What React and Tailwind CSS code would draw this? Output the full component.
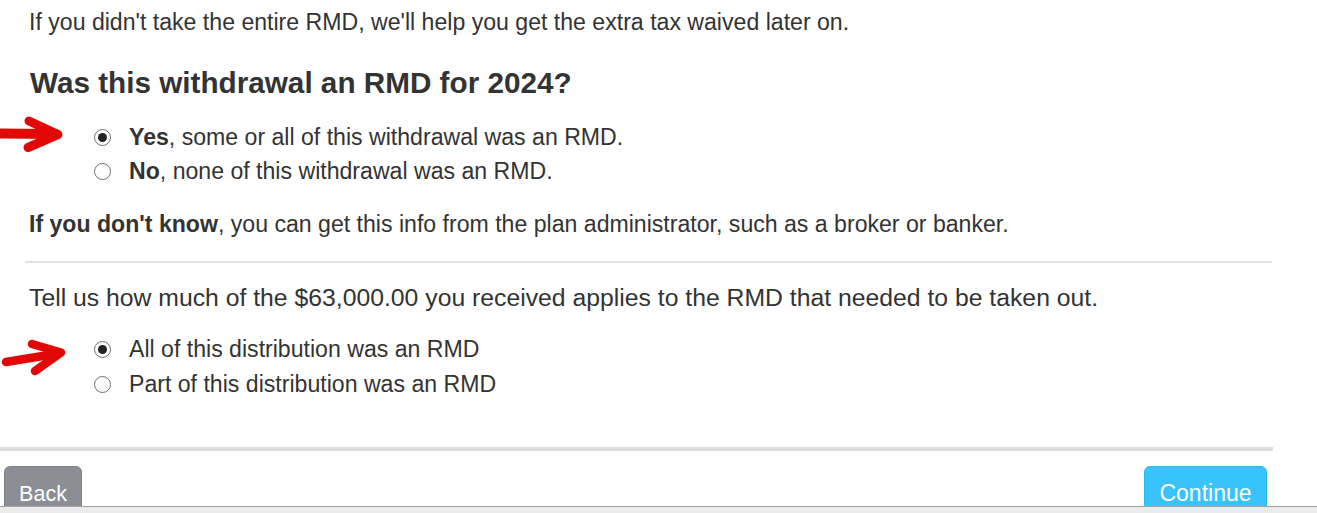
import React from "react";

function Radio({ checked, children }) {
  return (
    <div className="flex items-center h-[34.5px]">
      <span className="w-[17px] h-[17px] rounded-full border border-[#6e6e6e] bg-white flex items-center justify-center shrink-0 -ml-[0.5px]">
        {checked && <span className="w-[9px] h-[9px] rounded-full bg-[#222]" />}
      </span>
      <span className="ml-[18.5px]">{children}</span>
    </div>
  );
}

export default function App() {
  return (
    <div className="relative w-[1317px] h-[513px] overflow-hidden bg-white font-['Liberation_Sans',Arial,sans-serif] text-[#333] text-[23.1px] leading-[34.5px]">
      <div className="h-[506px] overflow-hidden">
        <div className="w-[1273px]">
          <div className="pl-[25px]">
            <p className="pl-[4px] pt-[5px]">
              If you didn't take the entire RMD, we'll help you get the extra tax waived later on.
            </p>
            <h2 className="pl-[5px] mt-[25px] text-[29.7px] font-bold leading-[35.4px]">
              Was this withdrawal an RMD for 2024?
            </h2>
            <div className="mt-[20px] pl-[69px] flex flex-col">
              <Radio checked>
                <b>Yes</b>, some or all of this withdrawal was an RMD.
              </Radio>
              <Radio>
                <b>No</b>, none of this withdrawal was an RMD.
              </Radio>
            </div>
            <p className="pl-[4px] mt-[18.5px]">
              <b>If you don't know</b>, you can get this info from the plan administrator, such as a broker or banker.
            </p>
            <div className="mt-[19.5px] mr-[1px] h-[2px] bg-[#e2e2e2]" />
            <p className="pl-[4px] mt-[17.4px] text-[24.75px]">
              Tell us how much of the $63,000.00 you received applies to the RMD that needed to be taken out.
            </p>
            <div className="mt-[17px] pl-[69px] flex flex-col">
              <Radio checked>All of this distribution was an RMD</Radio>
              <Radio>Part of this distribution was an RMD</Radio>
            </div>
          </div>
          <div className="mt-[46px] h-[4px] bg-[#dddddd]" />
          <div className="mt-[15px] flex justify-between pl-[4px] pr-[6px]">
            <button className="w-[78px] h-[53px] rounded-[6px] border border-[#7f828a] bg-[#8b8e95] text-white text-[21.5px] leading-[33px] pt-[11px] pb-[9px] text-center">
              Back
            </button>
            <button className="w-[123px] h-[53px] rounded-[6px] border border-[#30b8f0] bg-[#38c3fd] text-white text-[23px] leading-[33px] pt-[10px] pb-[10px] text-center">
              Continue
            </button>
          </div>
        </div>
      </div>
      <div className="h-[7px] border-t border-[#a3a3a3] bg-[#ebebeb]" />
      <svg
        className="absolute left-0 top-0 pointer-events-none"
        width="120"
        height="400"
        viewBox="0 0 120 400"
      >
        <g fill="none" stroke="#e30808" strokeLinecap="round" strokeLinejoin="round">
          <path d="M-4 133.5 L56 134" strokeWidth="10" />
          <path d="M29 121 L58 134.5 L28 147.5" strokeWidth="9" />
          <path d="M6 362 L58 353.5" strokeWidth="8.5" />
          <path d="M32 344 L61 352.5 L35 371" strokeWidth="8.5" />
        </g>
      </svg>
    </div>
  );
}
